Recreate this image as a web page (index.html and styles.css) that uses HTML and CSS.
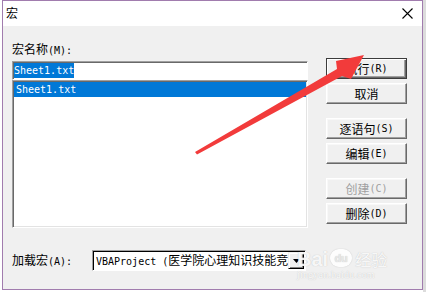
FILE: index.html
```html
<!DOCTYPE html>
<html>
<head>
<meta charset="utf-8">
<title>宏</title>
<link rel="stylesheet" href="styles.css">
</head>
<body>
<div class="win">
  <div class="titlebar">
    <span class="title">宏</span>
    <svg class="close" width="11" height="11" viewBox="0 0 11 11"><path d="M0.5 0.5L10.5 10.5M10.5 0.5L0.5 10.5" stroke="#000" stroke-width="1.1" fill="none"/></svg>
  </div>
  <div class="client">
    <div class="main">
      <div class="left">
        <div class="label">宏名称<span class="a">(M):</span></div>
        <div class="input"><span class="sel a">Sheet1.txt</span></div>
        <div class="list"><div class="row a">Sheet1.txt</div></div>
      </div>
      <div class="buttons">
        <div class="btn default">执行<span class="a">(R)</span></div>
        <div class="btn">取消</div>
        <div class="btn gap">逐语句<span class="a">(S)</span></div>
        <div class="btn">编辑<span class="a">(E)</span></div>
        <div class="btn gap disabled">创建<span class="a">(C)</span></div>
        <div class="btn">删除<span class="a">(D)</span></div>
      </div>
    </div>
    <div class="bottom">
      <div class="blabel">加载宏<span class="a">(A):</span></div>
      <div class="combo">
        <span class="ctext"><span class="a">VBAProject (</span>医学院心理知识技能竞</span>
        <span class="drop"><svg width="7" height="4" viewBox="0 0 7 4"><path d="M0 0H7L3.5 4Z" fill="#000"/></svg></span>
      </div>
    </div>
  </div>
</div>
<div class="watermark">
  <div class="wm-top"><span class="bai">Bai</span><span class="paw">du</span><span class="jy">经验</span></div>
  <div class="wm-url">jingyan.baidu.com</div>
</div>
<svg class="arrow" width="426" height="292" viewBox="0 0 426 292">
  <polygon points="195,152 337,69 336,61 364,55 351,79 342,76 197,154.5" fill="#f23b3b"/>
</svg>
</body>
</html>
```

FILE: styles.css
```css
html, body {
  margin: 0;
  padding: 0;
}
body {
  width: 426px;
  height: 292px;
  overflow: hidden;
  background: linear-gradient(to right, #ffffff 423px, #dcdcdc 423px);
  font-family: "Noto Sans CJK SC", sans-serif;
  font-size: 12px;
  color: #000;
  position: relative;
}
.a {
  font-family: "DejaVu Sans Mono", "Liberation Mono", monospace;
  font-size: 10px;
}
.win {
  margin-left: 2px;
  width: 421px;
  height: 290px;
  box-sizing: border-box;
  border: 1px solid #a17cae;
  display: flex;
  flex-direction: column;
}
.titlebar {
  height: 25px;
  background: #fff;
  display: flex;
  justify-content: space-between;
  align-items: flex-start;
  padding: 0 9px 0 3px;
}
.title {
  margin-top: 5px;
  line-height: 14px;
}
.close {
  margin-top: 7px;
  display: block;
}
.client {
  flex: 1;
  background: #f0f0f0;
  padding: 16px 0 0 9px;
}
.main {
  display: flex;
  align-items: flex-start;
}
.left {
  width: 296px;
  display: flex;
  flex-direction: column;
}
.label {
  height: 14px;
  line-height: 14px;
}
.input {
  margin-top: 5px;
  height: 19px;
  box-sizing: border-box;
  background: #fff;
  border: 1px solid;
  border-color: #a0a0a0 #fff #fff #a0a0a0;
  box-shadow: inset 1px 1px #696969;
  padding: 1px 0 0 1px;
  display: flex;
}
.sel {
  background: #0078d7;
  color: #fff;
  height: 15px;
  line-height: 15px;
}
.list {
  height: 148px;
  box-sizing: border-box;
  background: #fff;
  border: 1px solid;
  border-color: #a0a0a0 #fff #fff #a0a0a0;
  box-shadow: inset 1px 1px #696969, inset -1px -1px #e3e3e3;
  padding: 1px 1px 0 1px;
}
.row {
  background: #0078d7;
  color: #fff;
  height: 15px;
  line-height: 15px;
  padding-left: 2px;
}
.buttons {
  margin-left: 18px;
  padding-top: 16px;
  width: 81px;
  display: flex;
  flex-direction: column;
  gap: 4px;
}
.btn {
  height: 21px;
  box-sizing: border-box;
  border: 1px solid;
  border-color: #fff #696969 #696969 #fff;
  box-shadow: inset -1px -1px #a0a0a0, inset 1px 1px #f8f8f8;
  background: #f0f0f0;
  display: flex;
  align-items: center;
  justify-content: center;
  line-height: 14px;
}
.btn.default {
  border-color: #3c3c3c;
  box-shadow: inset 1px 1px #fff, inset -1px -1px #696969, inset -2px -2px #a0a0a0;
}
.btn.gap {
  margin-top: 10px;
}
.btn.disabled {
  color: #a0a0a0;
}
.bottom {
  margin-top: 22px;
  display: flex;
  align-items: center;
  height: 21px;
}
.blabel {
  width: 80px;
  line-height: 14px;
}
.combo {
  width: 214px;
  height: 21px;
  box-sizing: border-box;
  background: #fff;
  border: 1px solid;
  border-color: #a0a0a0 #fff #fff #a0a0a0;
  box-shadow: inset 1px 1px #000;
  padding: 1px 1px 1px 3px;
  display: flex;
  align-items: center;
  justify-content: space-between;
}
.ctext {
  white-space: nowrap;
  line-height: 15px;
}
.drop {
  width: 16px;
  height: 17px;
  box-sizing: border-box;
  background: #f0f0f0;
  border: 1px solid;
  border-color: #f0f0f0 #000 #000 #f0f0f0;
  box-shadow: inset 1px 1px #fff, inset -1px -1px #808080;
  display: flex;
  align-items: center;
  justify-content: center;
  flex-shrink: 0;
}
.drop svg {
  display: block;
}
.watermark {
  position: absolute;
  left: 297px;
  top: 240px;
  width: 104px;
  color: rgba(255, 255, 255, 0.9);
  text-shadow: 0 0 1px rgba(150, 150, 150, 0.6);
  font-family: "Liberation Sans", sans-serif;
}
.wm-top {
  display: flex;
  align-items: flex-end;
  height: 30px;
}
.bai {
  font-size: 20px;
  font-weight: bold;
  line-height: 22px;
}
.paw {
  margin-left: 2px;
  width: 22px;
  height: 18px;
  border-radius: 9px;
  background: rgba(255, 255, 255, 0.85);
  box-shadow: 0 0 1px rgba(150, 150, 150, 0.7);
  color: #e8e8e8;
  font-size: 11px;
  font-weight: bold;
  line-height: 18px;
  text-align: center;
  margin-bottom: 3px;
}
.jy {
  margin-left: 3px;
  font-family: "Noto Sans CJK SC", sans-serif;
  font-size: 16px;
  line-height: 22px;
}
.wm-url {
  font-family: "Liberation Serif", serif;
  font-size: 10px;
  line-height: 10px;
  letter-spacing: 0.2px;
}
.arrow {
  position: absolute;
  left: 0;
  top: 0;
  pointer-events: none;
}
```
